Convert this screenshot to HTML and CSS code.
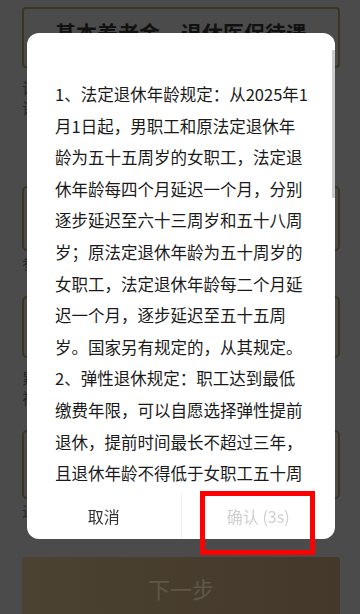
FILE: index.html
```html
<!DOCTYPE html>
<html>

<head>
	<meta http-equiv="Content-Type" content="text/html; charset=utf-8"/>
	<title>退休测算</title>
	<link rel="stylesheet" href="styles.css">
</head>

<body>
<div class="page">
	<div class="title-card">
		<h1>基本养老金、退休医保待遇</h1>
	</div>
	<p class="label">请选择您的出生年月<br>请选择您的参保类型</p>
	<div class="field"></div>
	<p class="label row">参保类型</p>
	<div class="field short"></div>
	<p class="label">累计缴费年限<br>视同缴费年限</p>
	<div class="field tall"></div>
	<p class="label row">退休时间</p>
	<button class="next" type="button">下一步</button>
</div>

<div class="dialog">
	<div class="dialog-body">
		<p>1、法定退休年龄规定：从2025年1月1日起，男职工和原法定退休年龄为五十五周岁的女职工，法定退休年龄每四个月延迟一个月，分别逐步延迟至六十三周岁和五十八周岁；原法定退休年龄为五十周岁的女职工，法定退休年龄每二个月延迟一个月，逐步延迟至五十五周岁。国家另有规定的，从其规定。</p>
		<p>2、弹性退休规定：职工达到最低缴费年限，可以自愿选择弹性提前退休，提前时间最长不超过三年，且退休年龄不得低于女职工五十周岁、五十五周岁及男职工六十周岁的原法定退休年龄。职工达到法定退休年龄，所在单位与职工协商一致的，可以弹性延迟退休，延迟时间最长不超过三年。</p>
	</div>
	<span class="thumb"></span>
	<div class="dialog-actions">
		<span class="cancel">取消</span>
		<span class="ok">确认 (3s)</span>
	</div>
</div>

<div class="mark"></div>
</body>

</html>
```

FILE: styles.css
```css
html {
    font-family: "Noto Sans CJK SC", "Liberation Sans", sans-serif;
}

body {
    margin: 0;
    width: 360px;
    height: 614px;
    overflow: hidden;
    background: #4b4b4b;
}

p {
    margin: 0;
}

.page {
    display: flex;
    flex-direction: column;
    padding: 7px 20px 0 22px;
}

.title-card {
    height: 57px;
    border: 2px solid #3b3421;
    border-radius: 4px;
    text-align: center;
}

.title-card h1 {
    margin: 10px 0 0 0;
    font-size: 21px;
    line-height: 26px;
    color: #111;
}

.label {
    font-size: 15px;
    line-height: 20px;
    color: #262626;
    margin-top: 10px;
}

.label.row {
    margin-top: 2px;
}

.field {
    height: 61px;
    margin-top: 68px;
    border: 2px solid #3b3421;
    border-radius: 5px;
}

.field.short {
    height: 58px;
    margin-top: 23px;
}

.field.tall {
    height: 65px;
    margin-top: 22px;
}

.next {
    margin-top: 36px;
    height: 70px;
    border: 0;
    border-radius: 4px;
    background: linear-gradient(90deg, #4c4231, #43382a);
    color: #5f574a;
    font-family: inherit;
    font-size: 22px;
    padding-bottom: 10px;
}

.dialog {
    position: fixed;
    left: 27px;
    top: 33px;
    width: 308px;
    height: 506px;
    background: #fff;
    border-radius: 12px;
    overflow: hidden;
    display: flex;
    flex-direction: column;
}

.dialog-body {
    flex: 1;
    overflow: hidden;
    padding: 46px 0 0 28px;
    width: 256px;
    font-size: 16.5px;
    line-height: 31.6px;
    color: #1a1a1a;
}

.thumb {
    position: absolute;
    right: 0;
    top: 17px;
    width: 3px;
    height: 148px;
    background: #cbcbcb;
}

.dialog-actions {
    display: flex;
    height: 46px;
    font-size: 16px;
    line-height: 46px;
    text-align: center;
}

.dialog-actions span {
    flex: 1;
}

.cancel {
    color: #333;
    border-right: 1px solid #eeeeee;
}

.ok {
    color: #cfcfcf;
}

.mark {
    position: fixed;
    left: 200px;
    top: 491px;
    width: 105px;
    height: 54px;
    border: 5px solid #ff0000;
}
```
